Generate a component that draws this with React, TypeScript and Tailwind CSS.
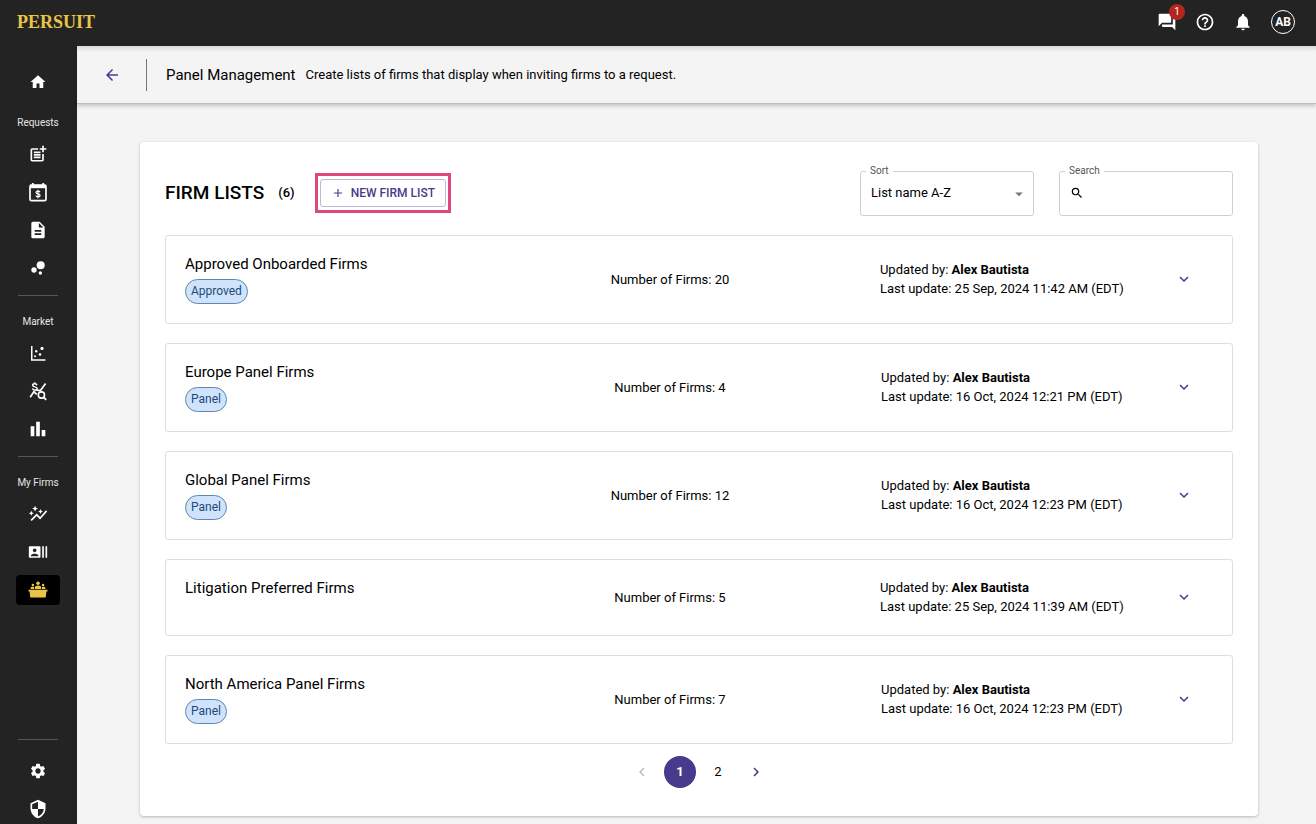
import { useState } from 'react';
import type { ReactNode } from 'react';
import {
  MdAdd,
  MdArrowBack,
  MdArrowDropDown,
  MdAutoGraph,
  MdBarChart,
  MdBubbleChart,
  MdChevronLeft,
  MdChevronRight,
  MdDescription,
  MdExpandMore,
  MdForum,
  MdHelpOutline,
  MdHome,
  MdNotifications,
  MdPostAdd,
  MdRecentActors,
  MdSearch,
  MdSecurity,
  MdSettings,
} from 'react-icons/md';

interface FirmList {
  name: string;
  tag?: string;
  firms: number;
  updatedBy: string;
  updatedAt: string;
}

const firmLists: FirmList[] = [
  { name: 'Approved Onboarded Firms', tag: 'Approved', firms: 20, updatedBy: 'Alex Bautista', updatedAt: '25 Sep, 2024 11:42 AM (EDT)' },
  { name: 'Europe Panel Firms', tag: 'Panel', firms: 4, updatedBy: 'Alex Bautista', updatedAt: '16 Oct, 2024 12:21 PM (EDT)' },
  { name: 'Global Panel Firms', tag: 'Panel', firms: 12, updatedBy: 'Alex Bautista', updatedAt: '16 Oct, 2024 12:23 PM (EDT)' },
  { name: 'Litigation Preferred Firms', firms: 5, updatedBy: 'Alex Bautista', updatedAt: '25 Sep, 2024 11:39 AM (EDT)' },
  { name: 'North America Panel Firms', tag: 'Panel', firms: 7, updatedBy: 'Alex Bautista', updatedAt: '16 Oct, 2024 12:23 PM (EDT)' },
];

// ─── Custom sidebar icons ───
function BudgetCalendarIcon() {
  return (
    <svg viewBox="0 0 20 20" className="w-5 h-5" fill="none" stroke="currentColor" aria-hidden="true">
      <rect x="2" y="3" width="16" height="15.6" rx="1.4" strokeWidth="1.7" />
      <path d="M2 2.8h16v3.4H2z" fill="currentColor" stroke="none" />
      <path d="M4.8 1v3M15.2 1v3" strokeWidth="1.8" />
      <path d="M12 10.2c-.3-.8-1-1.1-2-1.1-1.2 0-2 .5-2 1.3 0 2 4.1.9 4.1 3 0 .9-.9 1.4-2.1 1.4-1.1 0-1.9-.4-2.2-1.2M10 7.800v8.400" strokeWidth="1.2" />
    </svg>
  );
}

function ScatterIcon() {
  return (
    <svg viewBox="0 0 20 20" className="w-5 h-5" fill="currentColor" aria-hidden="true">
      <path d="M3 3h1.500v13.300H17.500v1.500H3z" />
      <circle cx="8.2" cy="8.3" r="1.2" />
      <circle cx="14" cy="5.4" r="1.6" />
      <circle cx="12" cy="11.5" r="1.3" />
      <circle cx="7" cy="13.2" r="1" />
    </svg>
  );
}

function PriceStatsIcon() {
  return (
    <svg viewBox="0 0 20 20" className="w-5 h-5" fill="none" stroke="currentColor" aria-hidden="true">
      <path d="M9 4.3C8.7 3.2 7.9 2.8 6.7 2.8c-1.3 0-2.1.5-2.1 1.4 0 2.3 4.6 1 4.6 3.4 0 1-.9 1.5-2.3 1.5-1.4 0-2.2-.5-2.5-1.6M6.8 1.200v1.600M6.800 9v1.600" strokeWidth="1.4" />
      <path d="M2.200 16.300l3.600-5.500 3 2.600" strokeWidth="1.7" />
      <path d="M8.200 9.200l4.200.4 5.200-7" strokeWidth="1.7" />
      <circle cx="13.4" cy="14" r="3.1" strokeWidth="1.6" />
      <path d="M15.700 16.300l2.500 2.600" strokeWidth="1.8" />
    </svg>
  );
}

function PanelIcon() {
  return (
    <svg viewBox="0 0 20 20" className="w-5 h-5" fill="currentColor" aria-hidden="true">
      <circle cx="10" cy="3.2" r="1.8" />
      <circle cx="4.9" cy="5" r="1.3" />
      <circle cx="15.1" cy="5" r="1.3" />
      <path d="M6.8 9V7.600c0-1.300 1.300-2 3.200-2s3.200.7 3.200 2V9z" />
      <path d="M2.600 9V8c0-.9.9-1.300 2.300-1.300.5 0 .8.1 1.100.2V9zM14 9V6.900c.3-.1.6-.2 1.100-.2 1.400 0 2.300.4 2.300 1.300v1z" />
      <path d="M.5 9.800h19v1.800h-1.100l-.7 5.900H2.300l-.7-5.900H.5z" />
    </svg>
  );
}

function NavItem({ label, active = false, children }: { label: string; active?: boolean; children: ReactNode }) {
  return (
    <a
      href="#"
      aria-label={label}
      aria-current={active ? 'page' : undefined}
      className={`flex items-center justify-center w-11 h-[30px] rounded ${
        active ? 'bg-black text-[#e8c547]' : 'text-white hover:bg-white/10'
      }`}
    >
      {children}
    </a>
  );
}

function NavSection({ title, children }: { title: string; children: ReactNode }) {
  return (
    <div className="flex flex-col items-center w-full">
      <h2 className="mt-[18px] mb-2 text-[10px] leading-4 text-[#e6e6e6]">{title}</h2>
      <div className="flex flex-col items-center gap-2">{children}</div>
    </div>
  );
}

function NavDivider() {
  return <hr className="w-10 shrink-0 border-t border-[#555]" />;
}

function Sidebar() {
  return (
    <nav aria-label="Main" className="flex flex-col items-center w-[77px] shrink-0 pt-[21px] pr-px bg-[#232323]">
      <NavItem label="Home">
        <MdHome className="w-[18px] h-[18px]" />
      </NavItem>
      <NavSection title="Requests">
        <NavItem label="New request"><MdPostAdd className="w-5 h-5" /></NavItem>
        <NavItem label="Budgets"><BudgetCalendarIcon /></NavItem>
        <NavItem label="Templates"><MdDescription className="w-5 h-5" /></NavItem>
        <NavItem label="Activity"><MdBubbleChart className="w-5 h-5" /></NavItem>
      </NavSection>
      <div className="mt-3"><NavDivider /></div>
      <NavSection title="Market">
        <NavItem label="Benchmarks"><ScatterIcon /></NavItem>
        <NavItem label="Rates"><PriceStatsIcon /></NavItem>
        <NavItem label="Reports"><MdBarChart className="w-[22px] h-[22px]" /></NavItem>
      </NavSection>
      <div className="mt-3"><NavDivider /></div>
      <NavSection title="My Firms">
        <NavItem label="Insights"><MdAutoGraph className="w-5 h-5" /></NavItem>
        <NavItem label="Contacts"><MdRecentActors className="w-5 h-5" /></NavItem>
        <NavItem label="Panels" active><PanelIcon /></NavItem>
      </NavSection>
      <div className="flex flex-col items-center gap-2 mt-auto">
        <div className="mb-2"><NavDivider /></div>
        <NavItem label="Settings"><MdSettings className="w-[18px] h-[18px]" /></NavItem>
        <NavItem label="Security"><MdSecurity className="w-5 h-5" /></NavItem>
      </div>
    </nav>
  );
}

function TopBar() {
  return (
    <header className="relative z-20 flex items-center justify-between h-[46px] pl-[17px] pr-[21px] pb-[3px] bg-[#232323] text-white">
      <a href="#" className="font-['Liberation_Serif',serif] text-[18px] leading-6 font-bold text-[#e8c547]">PERSUIT</a>
      <div className="flex items-center gap-[18px]">
        <button type="button" aria-label="Messages, 1 unread" className="relative">
          <MdForum className="w-5 h-5" />
          <span className="absolute -top-2 left-3 w-4 h-4 rounded-full bg-[#b3261e] text-[10px] leading-4 text-center">
            1
          </span>
        </button>
        <button type="button" aria-label="Help">
          <MdHelpOutline className="w-5 h-5" />
        </button>
        <button type="button" aria-label="Notifications">
          <MdNotifications className="w-5 h-5" />
        </button>
        <button type="button" aria-label="Account" className="w-6 h-6 rounded-full border border-white text-[12px] leading-5 font-bold text-center">
          AB
        </button>
      </div>
    </header>
  );
}

function FirmListRow({ list }: { list: FirmList }) {
  return (
    <li className="grid grid-cols-[6fr_7fr_6fr_58px] items-center px-[19px] pt-[18px] pb-[19px] border border-[#dedede] rounded-[3px]">
      <div>
        <h3 className="text-[15px] leading-5">{list.name}</h3>
        <div className="flex mt-[5px] min-h-[13px]">
          {list.tag && (
            <span className="h-[25px] px-[5px] rounded-full border border-[#5f87ad] bg-[#d0e3fc] text-[12px] leading-[23px] text-[#1d4a76]">
              {list.tag}
            </span>
          )}
        </div>
      </div>
      <p className="text-[13px] leading-[19px] text-center">Number of Firms: {list.firms}</p>
      <div className="justify-self-center text-[13px] leading-[19px]">
        <p>Updated by: <b className="font-bold">{list.updatedBy}</b></p>
        <p>Last update: {list.updatedAt}</p>
      </div>
      <button type="button" aria-label={`Expand ${list.name}`} className="justify-self-center text-[#483b8b]">
        <MdExpandMore className="w-[18px] h-[18px]" />
      </button>
    </li>
  );
}

export default function App() {
  const [search, setSearch] = useState('');

  return (
    <div className="flex flex-col min-h-screen bg-[#f4f4f4] font-[Roboto,sans-serif] text-black">
      <TopBar />
      <div className="flex flex-1">
        <Sidebar />
        <div className="flex-1 min-w-0">
          <div className="flex items-center h-[58px] pl-[26px] bg-linear-to-b from-[#d9d9d9] to-[#f4f4f4] to-[6px] border-b border-[#bdbdbd] shadow-[0_2px_4px_rgba(0,0,0,0.2)]">
            <button type="button" aria-label="Back" className="text-[#483b8b]">
              <MdArrowBack className="w-[18px] h-[18px]" />
            </button>
            <div className="w-px h-8 ml-[25px] mr-[19px] bg-[#777]" />
            <h1 className="text-[15px] leading-5">Panel Management</h1>
            <p className="ml-2.5 text-[13px] leading-5">Create lists of firms that display when inviting firms to a request.</p>
          </div>

          <main className="pt-[38px] pr-[58px] pb-[7px] pl-[63px]">
            <section className="px-[25px] pt-[29px] pb-7 rounded bg-white shadow-[0_1px_3px_rgba(0,0,0,0.25)]">
              <div className="flex items-center h-11">
                <h2 className="text-[19px] leading-6 font-medium">FIRM LISTS</h2>
                <span className="ml-3.5 text-[13px] leading-6 font-medium">(6)</span>
                <div className="ml-5 px-0.5 py-[3px] border-[3px] border-[#dd4880]">
                  <button
                    type="button"
                    className="flex items-center gap-1.5 h-7 px-2.5 rounded-[3px] border border-[#bdb8d8] text-[12px] font-medium text-[#483b8b]"
                  >
                    <MdAdd className="w-3.5 h-3.5" />
                    NEW FIRM LIST
                  </button>
                </div>

                <div className="flex gap-[25px] ml-auto">
                  <div className="relative w-[174px]">
                    <label htmlFor="sort" className="absolute -top-2 left-1.5 px-1 bg-white text-[10px] leading-4 text-[#555]">Sort</label>
                    <select id="sort" className="appearance-none w-full h-[45px] pl-2.5 pr-7 rounded-[3px] border border-[#cfcfcf] bg-white text-[13px]">
                      <option>List name A-Z</option>
                      <option>List name Z-A</option>
                      <option>Last update</option>
                    </select>
                    <MdArrowDropDown className="absolute top-3.5 right-1.5 w-[18px] h-[18px] text-[#757575] pointer-events-none" />
                  </div>
                  <div className="relative w-[174px]">
                    <label htmlFor="search" className="absolute -top-2 left-1.5 px-1 bg-white text-[10px] leading-4 text-[#555]">Search</label>
                    <div className="flex items-center gap-2 h-[45px] px-2.5 rounded-[3px] border border-[#cfcfcf]">
                      <MdSearch className="w-3.5 h-3.5 shrink-0" />
                      <input
                        id="search"
                        type="text"
                        value={search}
                        onChange={(e) => setSearch(e.target.value)}
                        className="w-full min-w-0 text-[13px] outline-none"
                      />
                    </div>
                  </div>
                </div>
              </div>

              <ul className="flex flex-col gap-[19px] mt-5">
                {firmLists.map((list) => (
                  <FirmListRow key={list.name} list={list} />
                ))}
              </ul>

              <nav aria-label="Pagination" className="flex items-center justify-center gap-1.5 mt-3 text-[13px]">
                <button type="button" aria-label="Previous page" disabled className="flex items-center justify-center w-8 h-8 text-[#bdbdbd]">
                  <MdChevronLeft className="w-[18px] h-[18px]" />
                </button>
                <button type="button" aria-current="page" className="w-8 h-8 rounded-full bg-[#483b8b] font-bold text-white">1</button>
                <button type="button" className="w-8 h-8">2</button>
                <button type="button" aria-label="Next page" className="flex items-center justify-center w-8 h-8 text-[#483b8b]">
                  <MdChevronRight className="w-[18px] h-[18px]" />
                </button>
              </nav>
            </section>
          </main>
        </div>
      </div>
    </div>
  );
}
